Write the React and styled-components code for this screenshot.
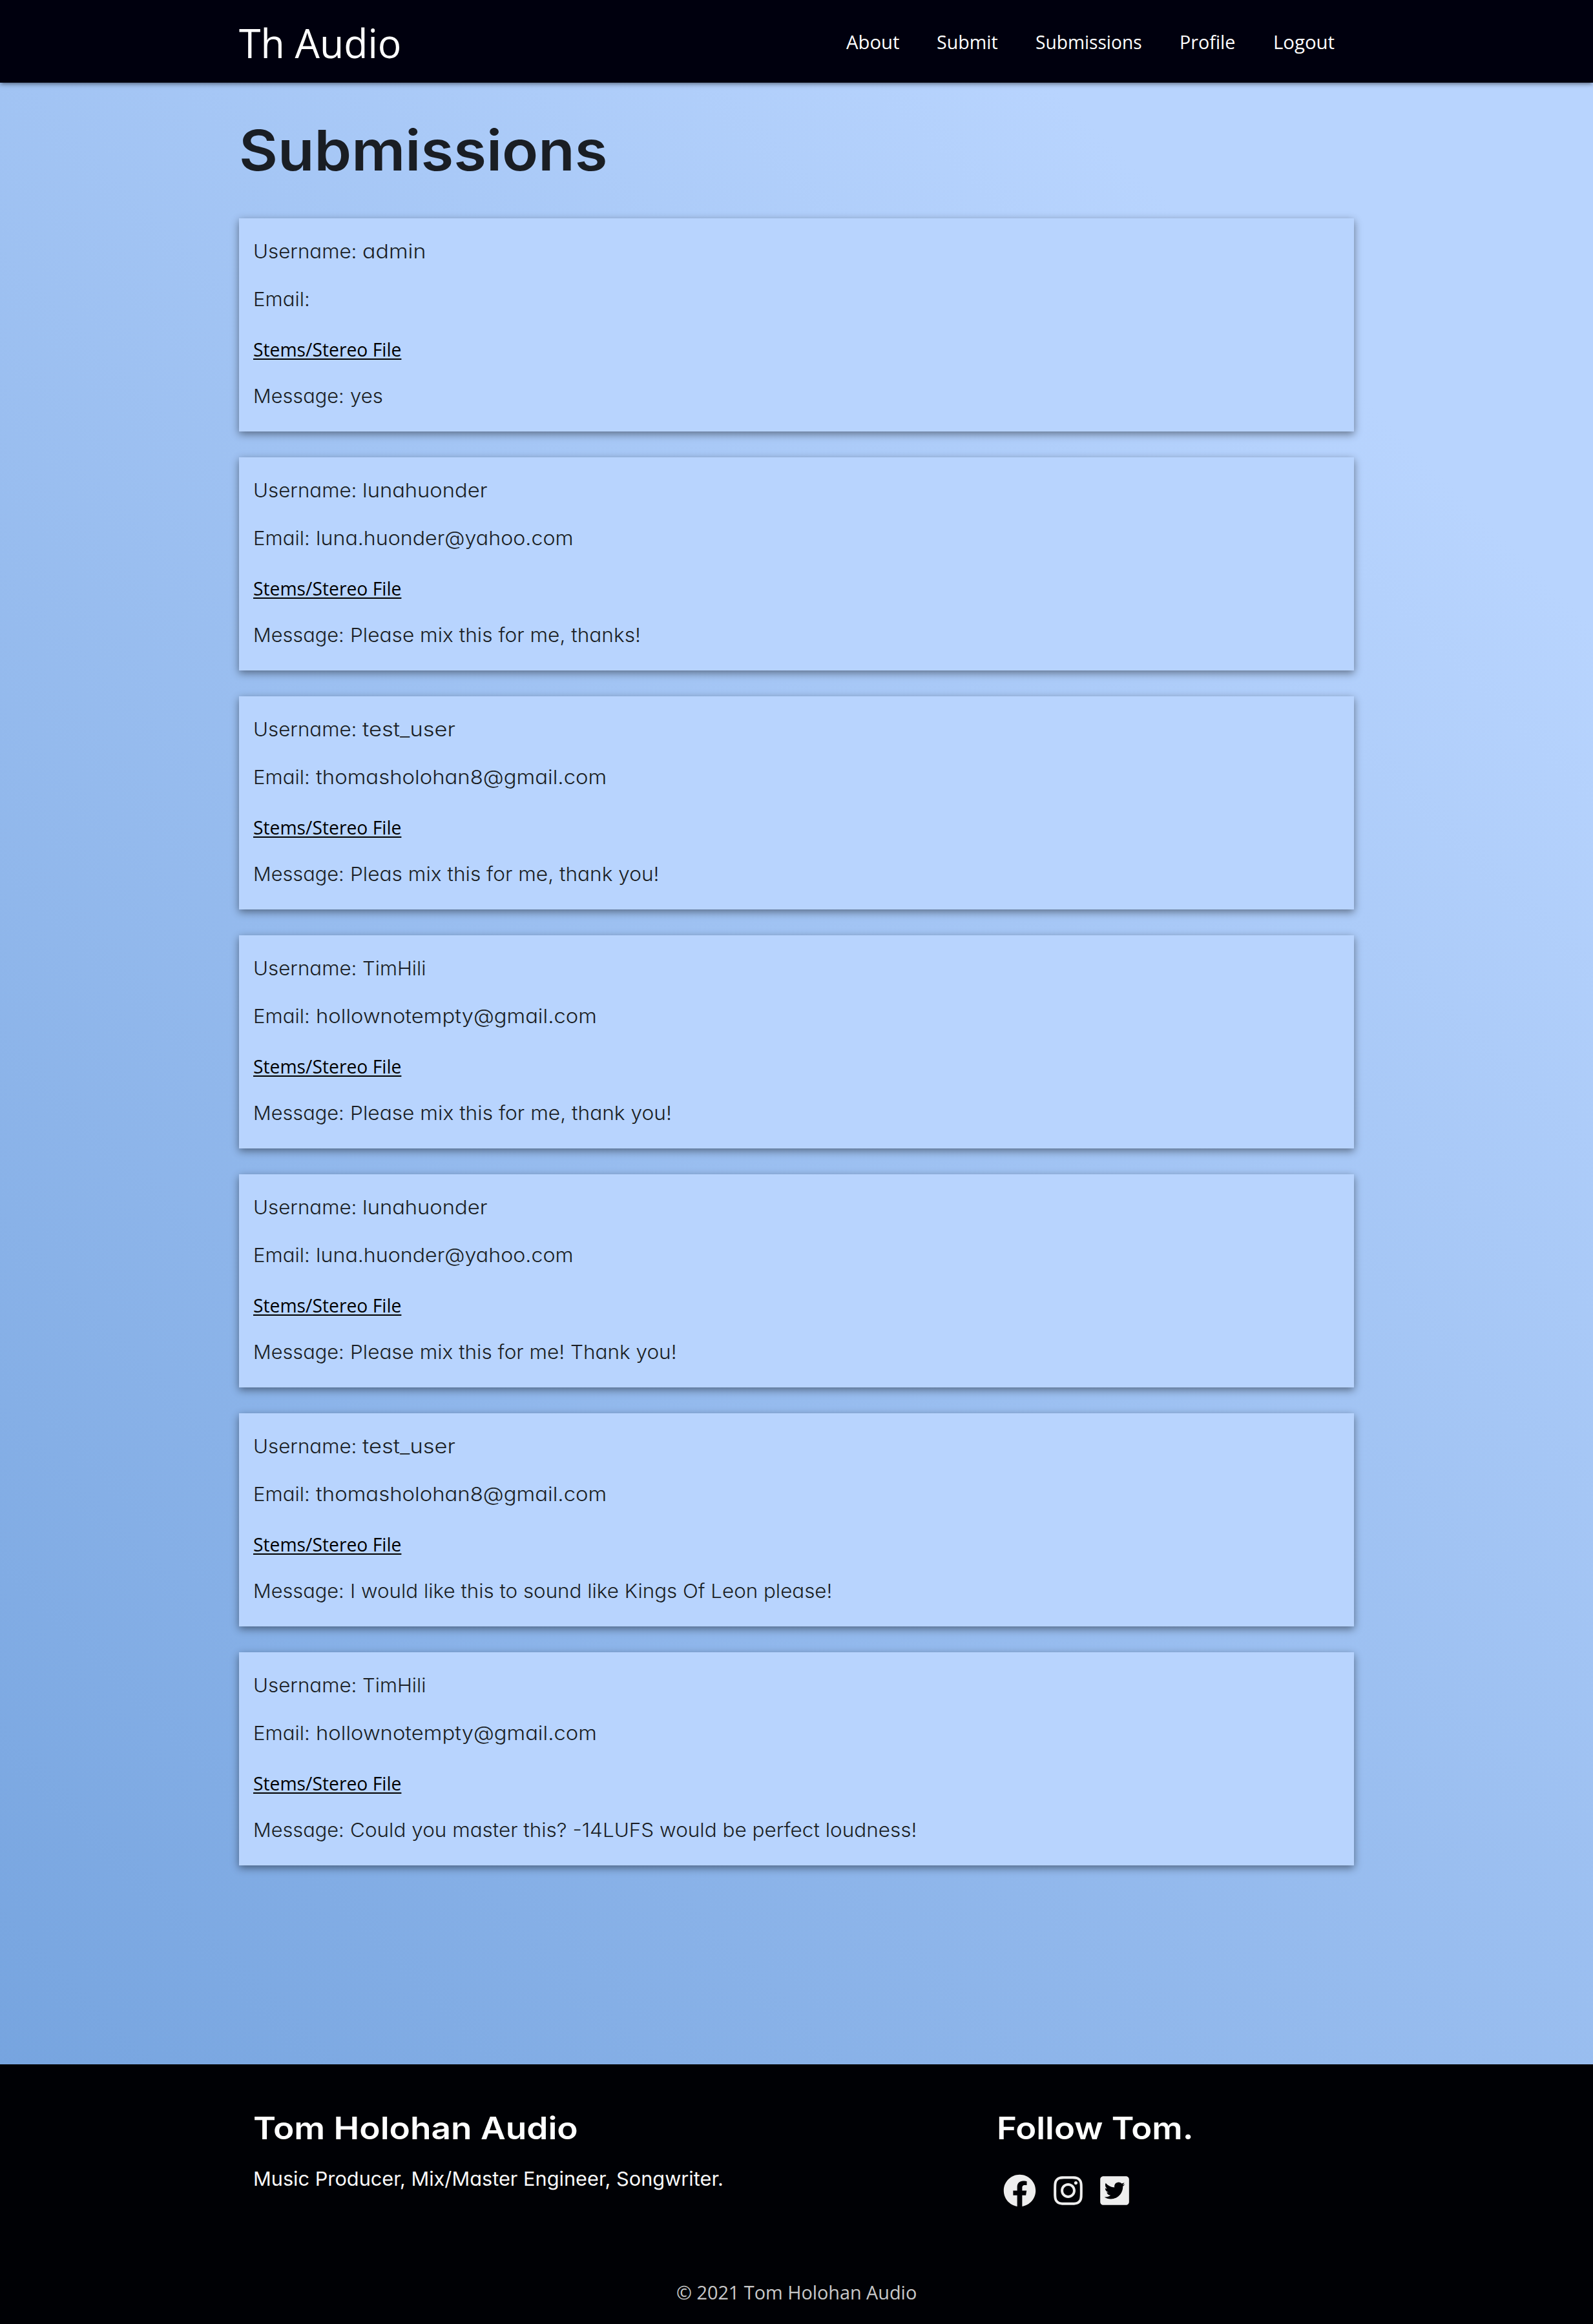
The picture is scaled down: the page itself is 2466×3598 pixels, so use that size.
import React, { useLayoutEffect, useRef, useState } from "react";
import styled, { createGlobalStyle } from "styled-components";
import { FaFacebook, FaInstagram, FaTwitterSquare } from "react-icons/fa";

const SYSTEM = '"Open Sans", "Noto Sans", sans-serif';
const BODY = 'Inter, "Open Sans", sans-serif';

const GlobalStyle = createGlobalStyle`
  *, *::before, *::after { box-sizing: border-box; }
  body {
    margin: 0;
    font: 400 29.5px/44px ${SYSTEM};
    color: #1a1e24;
  }
  h1, h5, p, ul { margin: 0; padding: 0; font-weight: inherit; }
  a { color: inherit; text-decoration: none; white-space: nowrap; }
`;

const Page = styled.div`
  display: flex;
  flex-direction: column;
  height: 3598px;
  background: linear-gradient(45deg, #76a4df 6%, #b8d4fe 84%);
`;

const Container = styled.div`
  width: 1726px;
  margin: 0 auto;
`;

const NavBar = styled.nav`
  height: 128px;
  flex: none;
  background: #00000e;
  color: #fff;
  box-shadow: 0 4px 4px 0 rgba(0, 0, 0, 0.14), 0 6px 2px -4px rgba(0, 0, 0, 0.12), 0 2px 10px 0 rgba(0, 0, 0, 0.2);
`;

const NavRow = styled(Container)`
  display: flex;
  justify-content: space-between;
`;

const Brand = styled.a`
  font-size: 62px;
  line-height: 132px;
`;

const Menu = styled.ul`
  display: flex;
  list-style: none;
  line-height: 130px;
  padding-right: 30px;
  gap: 58px;
`;

const Main = styled.main`
  flex: 1;
`;

const Title = styled.h1`
  font-family: ${BODY};
  font-weight: 600;
  font-size: 86px;
  line-height: 100px;
  padding-top: 55px;
  height: 210px;
`;

const CardList = styled.div`
  display: flex;
  flex-direction: column;
  gap: 40px;
`;

const Card = styled.article`
  height: 330px;
  padding: 29px 22px 0;
  background: #b8d4fe;
  box-shadow: 0 4px 12px rgba(0, 0, 0, 0.45);
`;

const Text = styled.p`
  display: flex;
  font-family: ${BODY};
  font-size: 30px;
  font-weight: 350;
  font-feature-settings: "cv11";
  line-height: 44px;
  margin-bottom: ${(p) => p.$gap || 30}px;
  white-space: nowrap;
`;

const FileLink = styled.a`
  display: flex;
  line-height: 44px;
  margin-bottom: 28px;
  color: #000;
  text-decoration: underline;
  text-decoration-thickness: 2px;
  text-underline-offset: 3px;
`;

const Footer = styled.footer`
  flex: none;
  height: 402px;
  background: #000105;
  color: #fff;
`;

const FooterRow = styled(Container)`
  display: grid;
  grid-template-columns: 1151px 1fr;
  height: 303px;
  padding: 67px 22px 0;
`;

const FooterTitle = styled.h5`
  font-family: ${BODY};
  font-weight: 600;
  font-size: 48px;
  line-height: 64px;
  height: 64px;
  margin-bottom: 24px;
`;

const Tagline = styled(Text)`
  font-weight: 400;
  color: #fafafa;
`;

const Social = styled.div`
  display: flex;
  gap: 27px;
  padding: 15px 0 0 10px;
  color: #eee;
`;

const iconSize = (width) => `
  display: block;
  flex: none;
  width: ${width}px;
  height: 51px;
`;
const FacebookIcon = styled(FaFacebook)`${iconSize(51)}`;
const InstagramIcon = styled(FaInstagram)`${iconSize(45)}`;
const TwitterIcon = styled(FaTwitterSquare)`${iconSize(45)}`;

const Copyright = styled.div`
  display: flex;
  justify-content: center;
  color: rgba(255, 255, 255, 0.8);
  line-height: 99px;
`;

const FitBox = styled.span`
  display: inline-block;
  flex: none;
  vertical-align: top;
  width: ${(p) => p.$width}px;
  white-space: pre;
  text-decoration: inherit;
`;

const FitInner = styled.span`
  display: inline-block;
  transform-origin: 0 50%;
  text-decoration: inherit;
`;

/* Sets a line of text to an exact width by stretching its glyphs horizontally. */
function Fit({ width, children }) {
  const ref = useRef(null);
  const [scale, setScale] = useState(1);
  useLayoutEffect(() => {
    setScale(width / ref.current.offsetWidth);
  }, [width, children]);
  return (
    <FitBox $width={width}>
      <FitInner ref={ref} style={{ transform: `scaleX(${scale})` }}>{children}</FitInner>
    </FitBox>
  );
}

const links = [
  ["About", 82.5],
  ["Submit", 95],
  ["Submissions", 165],
  ["Profile", 86.5],
  ["Logout", 95.5],
];

const admin = { user: ["admin", 98.5], email: ["", 0] };
const luna = { user: ["lunahuonder", 193], email: ["luna.huonder@yahoo.com", 399] };
const tester = { user: ["test_user", 143.5], email: ["thomasholohan8@gmail.com", 450.5] };
const tim = { user: ["TimHili", 98], email: ["hollownotempty@gmail.com", 435] };

const submissions = [
  { from: admin, message: ["yes", 51] },
  { from: luna, message: ["Please mix this for me, thanks!", 450] },
  { from: tester, message: ["Pleas mix this for me, thank you!", 478.5] },
  { from: tim, message: ["Please mix this for me, thank you!", 497.5] },
  { from: luna, message: ["Please mix this for me! Thank you!", 505] },
  { from: tester, message: ["I would like this to sound like Kings Of Leon please!", 746.5] },
  { from: tim, message: ["Could you master this? -14LUFS would be perfect loudness!", 877] },
];

function Field({ label, labelWidth, value, gap }) {
  const [text, width] = value;
  return (
    <Text $gap={gap}>
      <Fit width={labelWidth}>{label + ": "}</Fit>
      {text && <Fit width={width}>{text}</Fit>}
    </Text>
  );
}

export default function App() {
  return (
    <Page>
      <GlobalStyle />
      <NavBar>
        <NavRow>
          <Brand href="#"><Fit width={251}>Th Audio</Fit></Brand>
          <Menu>
            {links.map(([label, width]) => (
              <li key={label}><a href="#"><Fit width={width}>{label}</Fit></a></li>
            ))}
          </Menu>
        </NavRow>
      </NavBar>
      <Main>
        <Container>
          <Title><Fit width={570}>Submissions</Fit></Title>
          <CardList>
            {submissions.map(({ from, message }, i) => (
              <Card key={i}>
                <Field label="Username" labelWidth={169} value={from.user} />
                <Field label="Email" labelWidth={96.5} value={from.email} gap={34} />
                <FileLink href="#"><Fit width={229}>Stems/Stereo File</Fit></FileLink>
                <Field label="Message" labelWidth={149.5} value={message} />
              </Card>
            ))}
          </CardList>
        </Container>
      </Main>
      <Footer>
        <FooterRow>
          <div>
            <FooterTitle><Fit width={503}>Tom Holohan Audio</Fit></FooterTitle>
            <Tagline><Fit width={728}>Music Producer, Mix/Master Engineer, Songwriter.</Fit></Tagline>
          </div>
          <div>
            <FooterTitle><Fit width={305}>Follow Tom.</Fit></FooterTitle>
            <Social>
              <FacebookIcon />
              <InstagramIcon />
              <TwitterIcon />
            </Social>
          </div>
        </FooterRow>
        <Copyright><Fit width={372}>© 2021 Tom Holohan Audio</Fit></Copyright>
      </Footer>
    </Page>
  );
}
